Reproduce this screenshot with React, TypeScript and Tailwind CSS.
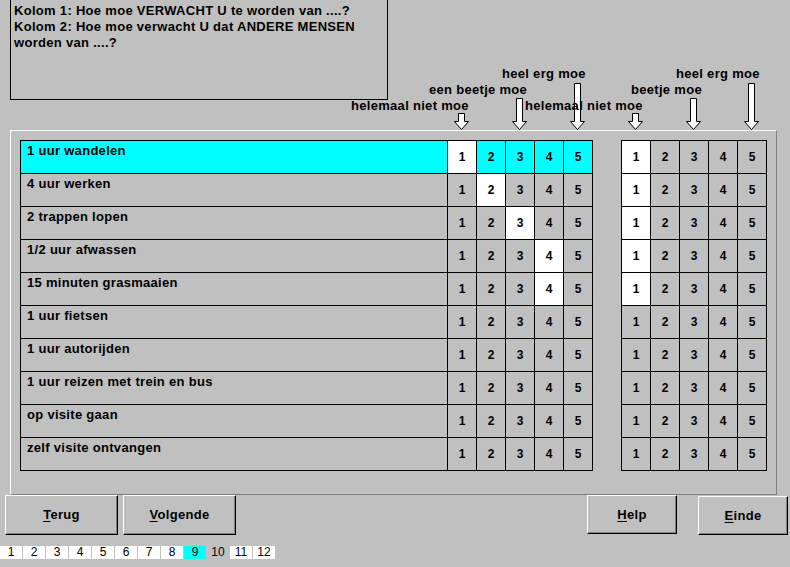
import React from "react";

const rows = [
  "1 uur wandelen",
  "4 uur werken",
  "2 trappen lopen",
  "1/2 uur afwassen",
  "15 minuten grasmaaien",
  "1 uur fietsen",
  "1 uur autorijden",
  "1 uur reizen met trein en bus",
  "op visite gaan",
  "zelf visite ontvangen",
];

const leftSel = [1, 2, 3, 4, 4, 0, 0, 0, 0, 0];
const rightSel = [1, 1, 1, 1, 1, 0, 0, 0, 0, 0];

const font = { fontFamily: '"Liberation Sans", Arial, sans-serif' };

function Arrow({ h, cls }: { h: number; cls: string }) {
  return (
    <svg className={`shrink-0 ${cls}`} width={15} height={h} viewBox={`0 0 15 ${h}`}>
      <polygon
        points={`4.5,0.5 10.5,0.5 10.5,${h - 8.5} 14.5,${h - 8.5} 7.5,${h - 0.5} 0.5,${h - 8.5} 4.5,${h - 8.5}`}
        fill="#fff"
        stroke="#000"
        strokeWidth={1}
      />
    </svg>
  );
}

function Btn({ label, w, h, cls }: { label: string; w: string; h: string; cls: string }) {
  return (
    <div
      className={`${w} ${h} ${cls} flex items-center justify-center border-t border-l border-t-white border-l-white border-r border-b border-r-black border-b-black shadow-[inset_-1px_-1px_0_#808080] text-[13px] font-bold tracking-[0.3px] text-black`}
    >
      <span>
        <span className="underline underline-offset-2">{label[0]}</span>
        {label.slice(1)}
      </span>
    </div>
  );
}

function Cell({ n, white, cyan }: { n: number; white: boolean; cyan: boolean }) {
  return (
    <div
      className={`w-[29px] h-full border-r border-black flex items-center justify-center text-[12px] font-bold ${
        white ? "bg-white" : cyan ? "bg-[#00ffff]" : ""
      }`}
    >
      {n}
    </div>
  );
}

export default function App() {
  return (
    <div className="w-[790px] h-[567px] bg-[#c0c0c0] overflow-hidden text-black" style={font}>
      {/* header: box, labels and arrows stacked in one grid cell */}
      <div className="grid h-[130px]">
        <div className="col-start-1 row-start-1 ml-[10px] w-[378px] h-[100px] border-l border-r border-b border-black pl-[3px] pt-[3px] text-[13px] leading-[16px] font-bold tracking-[0.3px]">
          Kolom 1: Hoe moe VERWACHT U te worden van ....?
          <br />
          Kolom 2: Hoe moe verwacht U dat ANDERE MENSEN
          <br />
          worden van ....?
        </div>

        <div className="col-start-1 row-start-1 flex items-end h-[130px]">
          <Arrow h={17} cls="ml-[454px]" />
          <Arrow h={32} cls="ml-[43px]" />
          <Arrow h={47} cls="ml-[43px]" />
          <Arrow h={17} cls="ml-[43px]" />
          <Arrow h={32} cls="ml-[43px]" />
          <Arrow h={47} cls="ml-[43px]" />
        </div>

        <div className="col-start-1 row-start-1 pt-[66px] flex flex-col text-[13px] leading-[16px] font-bold tracking-[0.3px] whitespace-nowrap">
          <div className="flex h-[16px]">
            <span className="ml-[502px] w-[174px]">heel erg moe</span>
            <span>heel erg moe</span>
          </div>
          <div className="flex h-[16px]">
            <span className="ml-[429px] w-[202px]">een beetje moe</span>
            <span>beetje moe</span>
          </div>
          <div className="flex h-[16px]">
            <span className="ml-[351px] w-[174px]">helemaal niet moe</span>
            <span>helemaal niet moe</span>
          </div>
        </div>
      </div>

      {/* panel */}
      <div className="ml-[10px] w-[767px] h-[365px] border-t border-l border-t-white border-l-white border-r border-b border-r-[#808080] border-b-[#808080] pt-[9px] pl-[9px]">
        <div className="flex gap-[28px]">
          <div className="w-[573px] border-t border-l border-black">
            {rows.map((r, i) => (
              <div
                key={r}
                className={`flex h-[33px] border-b border-black ${i === 0 ? "bg-[#00ffff]" : ""}`}
              >
                <div className="w-[427px] h-full border-r border-black pl-[6px] pt-[2px] text-[13px] leading-[16px] font-bold tracking-[0.3px]">
                  {r}
                </div>
                {[1, 2, 3, 4, 5].map((n) => (
                  <Cell key={n} n={n} white={leftSel[i] === n} cyan={i === 0} />
                ))}
              </div>
            ))}
          </div>
          <div className="w-[146px] border-t border-l border-black">
            {rows.map((r, i) => (
              <div key={r} className="flex h-[33px] border-b border-black">
                {[1, 2, 3, 4, 5].map((n) => (
                  <Cell key={n} n={n} white={rightSel[i] === n} cyan={false} />
                ))}
              </div>
            ))}
          </div>
        </div>
      </div>

      {/* buttons */}
      <div className="flex items-start">
        <Btn label="Terug" w="w-[113px]" h="h-[40px]" cls="ml-[5px]" />
        <Btn label="Volgende" w="w-[113px]" h="h-[40px]" cls="ml-[5px]" />
        <Btn label="Help" w="w-[90px]" h="h-[39px]" cls="ml-[351px]" />
        <Btn label="Einde" w="w-[90px]" h="h-[39px]" cls="ml-[21px] mt-[1px]" />
      </div>

      {/* page numbers */}
      <div className="flex gap-[1px] mt-[11px]">
        {Array.from({ length: 12 }, (_, k) => k + 1).map((n) => (
          <div
            key={n}
            className={`w-[22px] h-[13px] flex items-center justify-center text-[12px] leading-[13px] ${
              n === 9 ? "bg-[#00ffff]" : n === 10 ? "" : "bg-white"
            }`}
          >
            {n}
          </div>
        ))}
      </div>
    </div>
  );
}
